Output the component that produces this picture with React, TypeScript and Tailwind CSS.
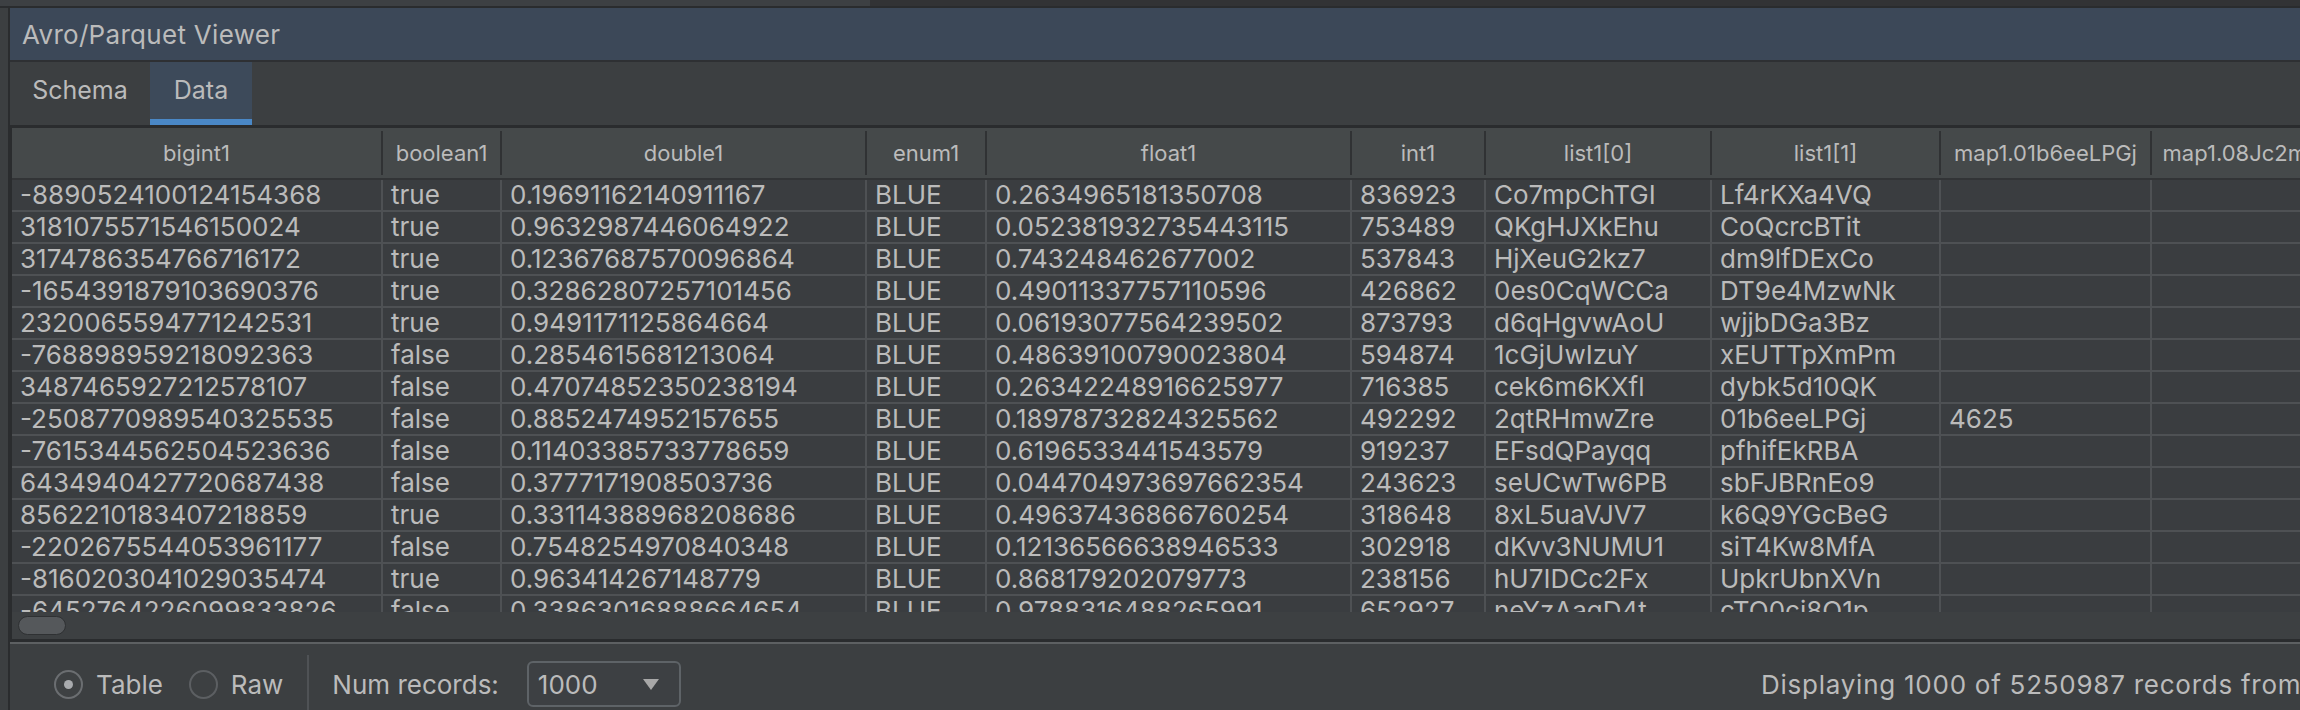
import React from "react";

const COLS = [
  { name: "bigint1", cls: "w-[371px]" },
  { name: "boolean1", cls: "w-[119px]" },
  { name: "double1", cls: "w-[365px]" },
  { name: "enum1", cls: "w-[120px]" },
  { name: "float1", cls: "w-[365px]" },
  { name: "int1", cls: "w-[134px]" },
  { name: "list1[0]", cls: "w-[226px]" },
  { name: "list1[1]", cls: "w-[229px]" },
  { name: "map1.01b6eeLPGj", cls: "w-[211px]" },
  { name: "map1.08Jc2mN5q", cls: "w-[211px]" },
];

const ROWS: string[][] = [
  ["-8890524100124154368", "true", "0.19691162140911167", "BLUE", "0.2634965181350708", "836923", "Co7mpChTGI", "Lf4rKXa4VQ", "", ""],
  ["3181075571546150024", "true", "0.9632987446064922", "BLUE", "0.052381932735443115", "753489", "QKgHJXkEhu", "CoQcrcBTit", "", ""],
  ["3174786354766716172", "true", "0.12367687570096864", "BLUE", "0.743248462677002", "537843", "HjXeuG2kz7", "dm9lfDExCo", "", ""],
  ["-1654391879103690376", "true", "0.32862807257101456", "BLUE", "0.49011337757110596", "426862", "0es0CqWCCa", "DT9e4MzwNk", "", ""],
  ["2320065594771242531", "true", "0.9491171125864664", "BLUE", "0.06193077564239502", "873793", "d6qHgvwAoU", "wjjbDGa3Bz", "", ""],
  ["-768898959218092363", "false", "0.2854615681213064", "BLUE", "0.48639100790023804", "594874", "1cGjUwIzuY", "xEUTTpXmPm", "", ""],
  ["3487465927212578107", "false", "0.47074852350238194", "BLUE", "0.26342248916625977", "716385", "cek6m6KXfl", "dybk5d10QK", "", ""],
  ["-2508770989540325535", "false", "0.8852474952157655", "BLUE", "0.18978732824325562", "492292", "2qtRHmwZre", "01b6eeLPGj", "4625", ""],
  ["-7615344562504523636", "false", "0.11403385733778659", "BLUE", "0.6196533441543579", "919237", "EFsdQPayqq", "pfhifEkRBA", "", ""],
  ["6434940427720687438", "false", "0.3777171908503736", "BLUE", "0.044704973697662354", "243623", "seUCwTw6PB", "sbFJBRnEo9", "", ""],
  ["8562210183407218859", "true", "0.33114388968208686", "BLUE", "0.49637436866760254", "318648", "8xL5uaVJV7", "k6Q9YGcBeG", "", ""],
  ["-2202675544053961177", "false", "0.7548254970840348", "BLUE", "0.12136566638946533", "302918", "dKvv3NUMU1", "siT4Kw8MfA", "", ""],
  ["-8160203041029035474", "true", "0.963414267148779", "BLUE", "0.868179202079773", "238156", "hU7IDCc2Fx", "UpkrUbnXVn", "", ""],
  ["-6452764226099833826", "false", "0.33863016888664654", "BLUE", "0.9788316488265991", "652927", "neYzAaqD4t", "cTQ0ci8Q1p", "", ""],
];

function Radio({ checked }: { checked?: boolean }) {
  return (
    <div
      className={
        checked
          ? "w-[29px] h-[29px] rounded-full border-2 border-[#6b6e71] bg-[#3e4143] flex items-center justify-center shrink-0"
          : "w-[29px] h-[29px] rounded-full border-2 border-[#5c5f62] bg-[#3d4042] shrink-0"
      }
    >
      {checked && <div className="w-[9px] h-[9px] rounded-full bg-[#a9abae]" />}
    </div>
  );
}

export default function App() {
  return (
    <div className="w-[2300px] h-[710px] overflow-hidden bg-[#3c3f41] flex flex-col font-['Inter',sans-serif] text-[#bbbbbb] antialiased">
      {/* top strip */}
      <div className="h-[8px] shrink-0 flex border-b-2 border-[#2a2c2e]">
        <div className="w-[870px] bg-[#3d4043]" />
        <div className="flex-1 bg-[#323335]" />
      </div>

      <div className="flex flex-1 min-h-0">
        {/* left strip */}
        <div className="w-[10px] shrink-0 bg-[#3c3f41] border-r-2 border-[#2a2c2e]" />

        <div className="flex-1 min-w-0 flex flex-col">
          {/* title */}
          <div className="h-[54px] shrink-0 bg-[#3c4858] border-b-2 border-[#2e3033] flex items-center pl-[12px] text-[26px] tracking-[0.3px] whitespace-nowrap">
            Avro/Parquet Viewer
          </div>

          {/* tabs */}
          <div className="h-[63px] shrink-0 flex bg-[#3c3f41] text-[25px]">
            <div className="w-[140px] flex items-center justify-center pb-[6px]">Schema</div>
            <div className="w-[102px] flex flex-col bg-[#3d4a5a]">
              <div className="flex-1 flex items-center justify-center">Data</div>
              <div className="h-[6px] bg-[#4a88c7]" />
            </div>
          </div>

          {/* table */}
          <div className="flex flex-col border-t-[3px] border-l-2 border-[#2a2c2e] shrink-0">
            <div className="h-[52px] flex bg-[#45494a] border-b-2 border-[#323436] text-[22px] shrink-0">
              {COLS.map((c) => (
                <div key={c.name} className={`${c.cls} shrink-0 flex items-center`}>
                  <div className="flex-1 min-w-0 text-center overflow-hidden whitespace-nowrap">{c.name}</div>
                  <div className="w-[2px] h-[44px] bg-[#303234]" />
                </div>
              ))}
            </div>
            <div className="h-[432px] overflow-hidden bg-[#3a3d40] text-[26px]">
              {ROWS.map((r, i) => (
                <div key={i} className="h-[32px] flex border-b-2 border-[#4e5154]">
                  {COLS.map((c, j) => (
                    <div
                      key={j}
                      className={`${c.cls} shrink-0 border-r-2 border-[#4e5154] pl-[8px] leading-[30px] overflow-hidden whitespace-nowrap`}
                    >
                      {r[j]}
                    </div>
                  ))}
                </div>
              ))}
            </div>
            {/* horizontal scrollbar */}
            <div className="h-[27px] bg-[#3d4042] flex items-center pl-[6px]">
              <div className="w-[48px] h-[19px] rounded-full bg-[#55585b] border border-[#2f3133]" />
            </div>
          </div>

          <div className="h-[3px] bg-[#2a2c2e] shrink-0" />
          <div className="h-[2px] bg-[#5d6062] shrink-0" />

          {/* bottom bar */}
          <div className="h-[66px] shrink-0 flex bg-[#3c3f41] text-[26px] whitespace-nowrap">
            <div className="w-[1751px] shrink-0 flex items-center pt-[14px] pl-[44px]">
              <Radio checked />
              <span className="ml-[13px]">Table</span>
              <div className="ml-[26px]">
                <Radio />
              </div>
              <span className="ml-[13px]">Raw</span>
              <div className="ml-[24px] w-[2px] h-[55px] self-end bg-[#4f5255]" />
              <span className="ml-[23px]">Num records:</span>
              <div className="ml-[28px] w-[154px] h-[46px] rounded-[6px] border-2 border-[#5e6367] bg-[#3d4043] flex items-center pl-[9px] pr-[20px]">
                <span>1000</span>
                <svg className="ml-auto" width="16" height="11" viewBox="0 0 16 11">
                  <polygon points="0,0 16,0 8,11" fill="#a8a8a8" />
                </svg>
              </div>
            </div>
            <div className="flex items-center pt-[14px] tracking-[0.75px]">
              Displaying 1000 of 5250987 records from /Users/data/userdata.parquet
            </div>
          </div>
        </div>
      </div>
    </div>
  );
}
